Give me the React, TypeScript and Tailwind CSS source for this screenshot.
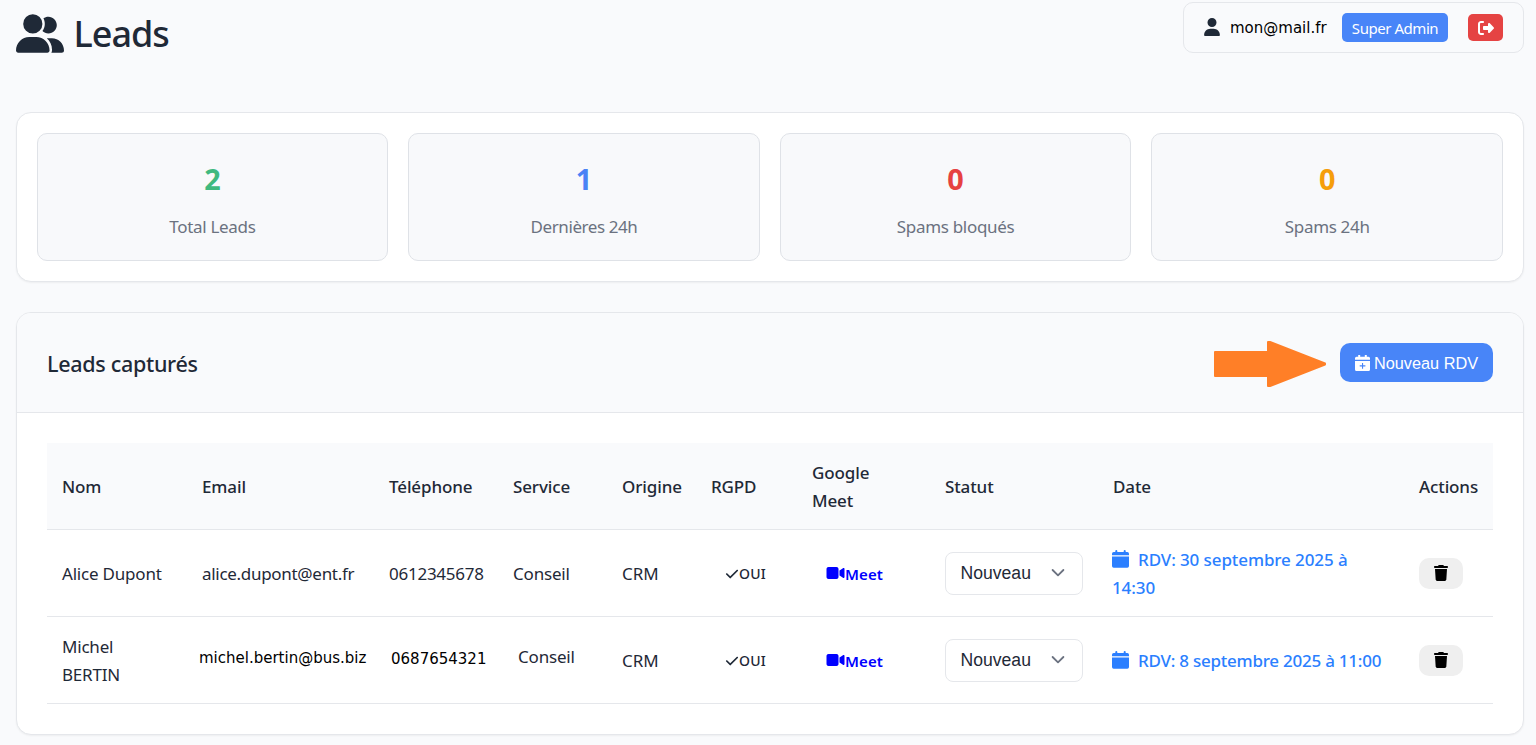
import React from "react";
import {
  FaCheck,
  FaRightFromBracket,
  FaTrash,
  FaUser,
  FaUserGroup,
  FaVideo,
} from "react-icons/fa6";

type Lead = {
  name: string;
  email: string;
  phone: string;
  service: string;
  date: string;
  dateTracking: string;
  edited: boolean;
};

const stats = [
  { value: "2", label: "Total Leads", color: "text-[#3fb97f]", tracking: "tracking-[-0.3px]" },
  { value: "1", label: "Dernières 24h", color: "text-[#4a83f5]", tracking: "tracking-[-0.42px]" },
  { value: "0", label: "Spams bloqués", color: "text-[#e64141]", tracking: "tracking-[-0.3px]" },
  { value: "0", label: "Spams 24h", color: "text-[#f59e0b]", tracking: "tracking-[-0.33px]" },
];

const columns = [
  { label: "Nom", width: "w-[140px]" },
  { label: "Email", width: "w-[187px]" },
  { label: "Téléphone", width: "w-[124px]" },
  { label: "Service", width: "w-[109px]" },
  { label: "Origine", width: "w-[89px]" },
  { label: "RGPD", width: "w-[101px]" },
  { label: "Google Meet", width: "w-[133px]" },
  { label: "Statut", width: "w-[168px]" },
  { label: "Date", width: "w-[306px]" },
  { label: "Actions", width: "w-[89px]" },
];

const leads: Lead[] = [
  {
    name: "Alice Dupont",
    email: "alice.dupont@ent.fr",
    phone: "0612345678",
    service: "Conseil",
    date: "RDV: 30 septembre 2025 à 14:30",
    dateTracking: "tracking-[-0.1px]",
    edited: false,
  },
  {
    name: "Michel BERTIN",
    email: "michel.bertin@bus.biz",
    phone: "0687654321",
    service: "Conseil",
    date: "RDV: 8 septembre 2025 à 11:00",
    dateTracking: "tracking-[-0.24px]",
    edited: true,
  },
];

function CalendarIcon() {
  return (
    <svg viewBox="0 0 17 18" className="mr-[9px] inline-block h-[18px] w-[17px] align-[-2px]" fill="currentColor">
      <path d="M3.3 1a1 1 0 0 1 2 0v1h6.4V1a1 1 0 0 1 2 0v1h1.6A1.7 1.7 0 0 1 17 3.7V5.2H0V3.7A1.7 1.7 0 0 1 1.7 2h1.6z" />
      <path d="M0 6.5h17v9.6a1.7 1.7 0 0 1-1.7 1.7H1.7A1.7 1.7 0 0 1 0 16.1z" />
    </svg>
  );
}

function CalendarPlusIcon() {
  return (
    <svg viewBox="0 0 15 16" className="h-4 w-[15px]" fill="currentColor">
      <path d="M3.2 0h2v1.7h4.6V0h2v1.7h1.7A1.5 1.5 0 0 1 15 3.2v1.5H0V3.2a1.5 1.5 0 0 1 1.5-1.5h1.7z" />
      <path
        fillRule="evenodd"
        d="M0 6h15v8.5a1.5 1.5 0 0 1-1.5 1.5h-12A1.5 1.5 0 0 1 0 14.5zM7 8v2.3H4.7v1.1H7v2.3h1.1v-2.3h2.3v-1.1H8.1V8z"
      />
    </svg>
  );
}

function StatusSelect() {
  return (
    <button className="flex h-[43px] w-[138px] items-center justify-between rounded-lg border border-[#e5e7eb] bg-white pr-[12px] pl-[14.5px] font-['Liberation_Sans',sans-serif] text-[17.6px] text-[#1f2937]">
      <span>Nouveau</span>
      <svg viewBox="0 0 20 20" className="h-6 w-6" fill="none" stroke="#6b7280" strokeWidth="1.5" strokeLinecap="round" strokeLinejoin="round">
        <path d="m5.5 7.5 4.5 4.5 4.5-4.5" />
      </svg>
    </button>
  );
}

function LeadRow({ lead }: { lead: Lead }) {
  return (
    <tr className="h-[87px]">
      <td className="px-[15px] pt-0.5 pr-5 tracking-[-0.2px]">{lead.name}</td>
      {lead.edited ? (
        <>
          <td className="pb-1 pl-[12px] font-['DejaVu_Sans',sans-serif] text-[15px] whitespace-nowrap text-black">
            {lead.email}
          </td>
          <td className="pb-[2px] pl-[17px] font-['DejaVu_Sans',sans-serif] text-[15px] text-black">{lead.phone}</td>
          <td className="pb-[6px] pl-5 tracking-[-0.2px]">{lead.service}</td>
        </>
      ) : (
        <>
          <td className="px-[15px] pt-0.5 tracking-[-0.3px] whitespace-nowrap">{lead.email}</td>
          <td className="px-[15px] pt-0.5 tracking-[-0.25px]">{lead.phone}</td>
          <td className="px-[15px] pt-0.5 tracking-[-0.2px]">{lead.service}</td>
        </>
      )}
      <td className="px-[15px] pt-0.5">CRM</td>
      <td className="pt-px pl-[29px]">
        <span className="flex items-center text-sm font-medium">
          <FaCheck className="size-[14px]" />
          <span className="tracking-[0.2px]">OUI</span>
        </span>
      </td>
      <td className="pl-[29px]">
        <a className="flex items-center text-[15px] font-semibold text-[#0000ff]">
          <FaVideo className="h-4 w-[19px] shrink-0" />
          <span className="pt-px tracking-[0.1px]">Meet</span>
        </a>
      </td>
      <td className="px-[15px]">
        <StatusSelect />
      </td>
      <td className={`pt-0.5 pr-[15px] pl-[14px] font-medium text-[#2b7fff] ${lead.dateTracking}`}>
        <CalendarIcon />
        {lead.date}
      </td>
      <td className="px-[15px]">
        <button className="flex h-[31px] w-11 items-center justify-center rounded-[10px] bg-[#efefef] text-black">
          <FaTrash className="h-4 w-[14px]" />
        </button>
      </td>
    </tr>
  );
}

export default function App() {
  return (
    <div className="flex h-[745px] flex-col overflow-hidden bg-[#f9fafc] pt-[2px] pr-3 pl-4 font-['Noto_Sans',sans-serif] text-[#1f2937]">
      <header className="flex h-[51px] shrink-0 justify-between">
        <h1 className="-ml-[0.5px] flex items-start gap-[10px] pt-[11px] text-[36px] leading-[42px] font-medium tracking-[-1px]">
          <FaUserGroup className="mt-[0.5px] h-[39px] w-12" />
          <span>Leads</span>
        </h1>
        <div className="flex h-[51px] w-[341px] items-center rounded-[10px] border border-[#e5e7eb] pl-5">
          <FaUser className="mb-px h-[18px] w-4" />
          <span className="ml-[10px] w-[112px] pt-px font-['DejaVu_Sans',sans-serif] text-[15px] whitespace-nowrap text-black">
            mon@mail.fr
          </span>
          <span className="flex h-[29px] w-[106px] items-center justify-center rounded-[5px] bg-[#4885f8] pt-0.5 text-[15px] tracking-[-0.45px] text-white">
            Super Admin
          </span>
          <button className="ml-5 flex h-[27px] w-[35px] items-center justify-center rounded-[5px] bg-[#e54343] text-white">
            <FaRightFromBracket className="size-4" />
          </button>
        </div>
      </header>

      <section className="mt-[59px] grid h-[170px] shrink-0 grid-cols-4 gap-5 rounded-[15px] border border-[#e5e7eb] bg-white py-5 pr-5 pl-[19.6px] shadow-xs">
        {stats.map((s) => (
          <div key={s.label} className="flex flex-col items-center rounded-[10px] border border-[#dfe2e7] bg-[#f8f9fb] pt-6">
            <span className={`text-[28.8px] leading-[42px] font-bold ${s.color}`}>{s.value}</span>
            <span className={`mt-[13px] text-[17px] leading-7 text-[#6b7280] ${s.tracking}`}>{s.label}</span>
          </div>
        ))}
      </section>

      <section className="mt-[30px] h-[423px] shrink-0 overflow-hidden rounded-[15px] border border-[#e5e7eb] bg-white shadow-xs">
        <div className="flex h-[100px] items-center border-b border-[#e5e7eb] bg-[#f9fafc] px-[30px]">
          <h2 className="flex-1 pt-1 text-[21.5px] font-medium tracking-[-0.3px]">Leads capturés</h2>
          <svg viewBox="0 0 113 46" className="mt-0.5 mr-[14px] h-[46px] w-[113px]" fill="#ff7f27" stroke="#ff7f27" strokeWidth="2" strokeLinejoin="round">
            <path d="M2 11h53V1h2l55 21.5v1L57 45h-2V35H2z" />
          </svg>
          <button className="flex h-[39px] w-[153px] items-center justify-center gap-[4px] rounded-[10px] bg-[#4885f8] font-['Liberation_Sans',sans-serif] text-[16.3px] text-white">
            <CalendarPlusIcon />
            <span className="pt-px">Nouveau RDV</span>
          </button>
        </div>
        <div className="p-[30px]">
          <table className="w-[1446px] table-fixed border-separate border-spacing-0 text-left text-[17px] leading-7 [&_td]:border-b [&_td]:border-[#e5e7eb]">
            <thead>
              <tr className="h-[87px] bg-[#f9fafc]">
                {columns.map((c) => (
                  <th key={c.label} className={`${c.width} border-b border-[#e5e7eb] pt-px pr-4 pl-[15px] font-medium tracking-[-0.12px]`}>
                    {c.label}
                  </th>
                ))}
              </tr>
            </thead>
            <tbody>
              {leads.map((lead) => (
                <LeadRow key={lead.email} lead={lead} />
              ))}
            </tbody>
          </table>
        </div>
      </section>
    </div>
  );
}
